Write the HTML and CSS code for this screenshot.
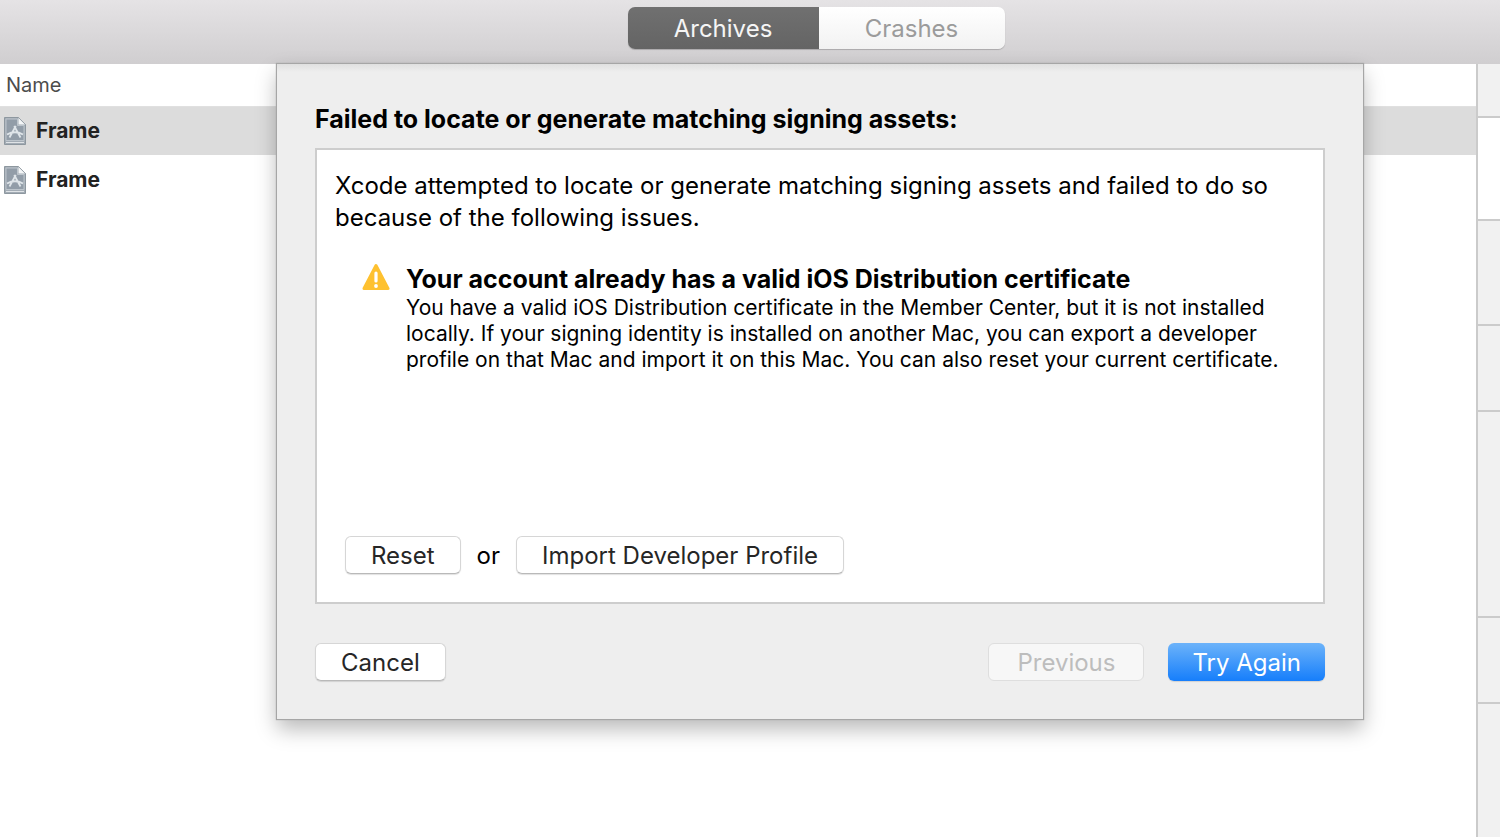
FILE: index.html
```html
<!DOCTYPE html>
<html lang="en">
<head>
  <meta charset="UTF-8">
  <meta name="viewport" content="width=device-width, initial-scale=1.0">
  <title>Organizer - Archives</title>
  <link rel="stylesheet" href="styles.css">
</head>
<body>
  <svg class="defs" aria-hidden="true">
    <symbol id="app-file" viewBox="0 0 22 28">
      <path d="M.5 .5H14.500L21.500 7.500V27.500H.5Z" fill="#a3acb5" stroke="#8d979f"/>
      <path d="M2 2H13.500V8.500H20V23.500H2Z" fill="#929da8" stroke="#bcc4cb"/>
      <path d="M14.500 1V7.500H21Z" fill="#f4f6f7"/>
      <path d="M2 25.500H20" stroke="#dfe3e6"/>
      <path d="M11.800 9L5.500 20.500M10.200 9L16.500 20.500M3 17.500Q11 13 19 17.500" fill="none" stroke="#dfe5e9" stroke-width="1.800"/>
    </symbol>
  </svg>

  <header class="toolbar">
    <nav class="tabs">
      <button class="tab active" type="button">Archives</button>
      <button class="tab" type="button">Crashes</button>
    </nav>
  </header>

  <div class="content">
    <table class="archives">
      <thead>
        <tr><th>Name</th></tr>
      </thead>
      <tbody>
        <tr class="selected">
          <td><div class="archive"><svg class="file-icon" aria-hidden="true"><use href="#app-file"/></svg>Frame</div></td>
        </tr>
        <tr>
          <td><div class="archive"><svg class="file-icon" aria-hidden="true"><use href="#app-file"/></svg>Frame</div></td>
        </tr>
      </tbody>
    </table>

    <aside class="inspector">
      <div class="pane pane-top"></div>
      <div class="pane pane-info"></div>
      <div class="pane pane-upload"></div>
      <div class="pane pane-export"></div>
      <div class="pane pane-details"></div>
      <div class="pane pane-symbols"></div>
      <div class="pane"></div>
    </aside>

    <section class="sheet" role="dialog" aria-labelledby="sheet-title">
      <h1 id="sheet-title">Failed to locate or generate matching signing assets:</h1>

      <div class="box">
        <p class="intro">Xcode attempted to locate or generate matching signing assets and failed to do so<br>because of the following issues.</p>

        <div class="issue">
          <svg class="warning" viewBox="0 0 28 28" aria-hidden="true">
            <path d="M14 2.500L26 25.500H2Z" fill="#fec130" stroke="#fec130" stroke-width="3" stroke-linejoin="round"/>
            <path d="M14 10V18" stroke="#fff" stroke-width="3.200" stroke-linecap="round"/>
            <circle cx="14" cy="23" r="1.900" fill="#fff"/>
          </svg>
          <div>
            <h2>Your account already has a valid iOS Distribution certificate</h2>
            <p class="detail">You have a valid iOS Distribution certificate in the Member Center, but it is not installed<br>locally. If your signing identity is installed on another Mac, you can export a developer<br>profile on that Mac and import it on this Mac. You can also reset your current certificate.</p>
          </div>
        </div>

        <div class="fixes">
          <button class="btn" type="button">Reset</button>
          <span>or</span>
          <button class="btn" type="button">Import Developer Profile</button>
        </div>
      </div>

      <div class="actions">
        <button class="btn cancel" type="button">Cancel</button>
        <button class="btn" type="button" disabled>Previous</button>
        <button class="btn primary" type="button">Try Again</button>
      </div>
    </section>
  </div>
</body>
</html>
```

FILE: styles.css
```css
* {
  box-sizing: border-box;
}
body {
  margin: 0;
  min-height: 100vh;
  display: flex;
  flex-direction: column;
  font-family: Inter, "Liberation Sans", sans-serif;
  font-size: 24px;
  color: #000;
  background: #fff;
}
h1, h2, p {
  margin: 0;
}
button {
  font: inherit;
}
.defs {
  display: none;
}

/* toolbar */
.toolbar {
  display: flex;
  justify-content: center;
  height: 64px;
  padding: 7px 0 15px 132px;
  background: linear-gradient(#e5e3e5, #d0ced0);
}
.tabs {
  display: flex;
  border-radius: 7px;
  box-shadow: 0 1px 1px #aaa8aa;
}
.tab {
  width: 186px;
  padding: 0;
  border: none;
  border-radius: 0 7px 7px 0;
  background: linear-gradient(#fff, #f2f2f2);
  color: #9b9b9b;
}
.tab.active {
  width: 191px;
  border-radius: 7px 0 0 7px;
  background: linear-gradient(#707070, #646464);
  color: #f5f5f5;
}

/* archive list */
.content {
  position: relative;
  flex: 1;
  display: flex;
  align-items: stretch;
}
.archives {
  flex: 1;
  align-self: flex-start;
  border-collapse: collapse;
}
.archives th {
  height: 42px;
  padding: 0 6px;
  border-bottom: 1px solid #e0e0e0;
  text-align: left;
  font-size: 20px;
  font-weight: 400;
  color: #4c4c4c;
}
.archives td {
  height: 49px;
  padding: 0 4px;
  font-size: 21px;
  font-weight: 700;
  color: #222;
}
.archives .selected {
  background: #dcdcdc;
}
.archive {
  display: flex;
  align-items: center;
  gap: 10px;
}
.file-icon {
  width: 22px;
  height: 28px;
}

/* right edge */
.inspector {
  display: flex;
  flex-direction: column;
  width: 24px;
  border-left: 2px solid #cbcbcb;
  background: #f1f1f1;
}
.pane {
  border-bottom: 2px solid #cbcbcb;
}
.pane:last-child {
  border-bottom: none;
}
.pane-top {
  height: 54px;
}
.pane-info {
  height: 103px;
  background: #fff;
}
.pane-upload {
  height: 105px;
}
.pane-export,
.pane-symbols {
  height: 86px;
}
.pane-details {
  height: 206px;
}

/* sheet hanging from the toolbar */
.sheet {
  position: absolute;
  top: 0;
  left: 277px;
  right: 137px;
  padding: 39px 38px 38px;
  background: linear-gradient(#e0e0e0, #eee 8px);
  box-shadow: 0 0 1px 1px #a6a6a6, 0 10px 20px rgba(0, 0, 0, 0.28);
}
.sheet h1 {
  font-size: 25px;
  line-height: 32px;
  font-weight: 700;
}
.box {
  display: flex;
  flex-direction: column;
  min-height: 456px;
  margin-top: 13px;
  padding: 20px 18px 28px;
  border: 2px solid #cdcdcd;
  background: #fff;
}
.intro {
  line-height: 32px;
}
.issue {
  display: flex;
  gap: 16px;
  margin-top: 29px;
  padding-left: 27px;
}
.issue h2 {
  font-size: 25px;
  line-height: 32px;
  font-weight: 700;
}
.warning {
  flex: none;
  width: 28px;
  height: 28px;
}
.detail {
  font-size: 21px;
  line-height: 26px;
}
.fixes {
  display: flex;
  align-items: center;
  gap: 16px;
  margin-top: auto;
  padding-left: 10px;
}
.btn {
  height: 38px;
  padding: 0 25px;
  border: 1px solid #d6d6d6;
  border-bottom-color: #b9b9b9;
  border-radius: 6px;
  background: #fff;
  color: #262626;
  box-shadow: 0 1px 1px rgba(0, 0, 0, 0.12);
}
.actions {
  display: flex;
  gap: 24px;
  margin-top: 39px;
}
.cancel {
  margin-right: auto;
}
.btn:disabled {
  padding: 0 28px;
  border-color: #dedede;
  background: #f7f7f7;
  color: #bdbdbd;
  box-shadow: none;
}
.primary {
  padding: 0 24px;
  border: none;
  background: linear-gradient(#6cb3fa, #167efb);
  color: #fff;
}
```
